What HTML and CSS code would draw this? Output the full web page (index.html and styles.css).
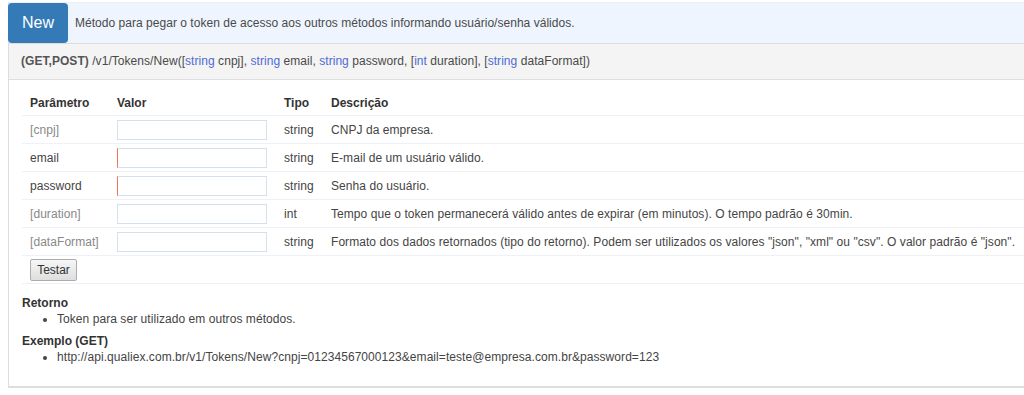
FILE: index.html
```html
<!DOCTYPE html>
<html lang="pt-BR">
<head>
<meta charset="utf-8">
<title>Tokens/New</title>
<link rel="stylesheet" href="styles.css">
</head>
<body>
<div class="panel">
  <div class="panel-head">
    <span class="badge-new">New</span>
    <span class="head-text">Método para pegar o token de acesso aos outros métodos informando usuário/senha válidos.</span>
  </div>
  <div class="signature">
    <b>(GET,POST)</b> /v1/Tokens/New([<span class="type">string</span> cnpj], <span class="type">string</span> email, <span class="type">string</span> password, [<span class="type">int</span> duration], [<span class="type">string</span> dataFormat])
  </div>
  <div class="panel-body">
    <table class="params">
      <colgroup>
        <col class="c1"><col class="c2"><col class="c3"><col class="c4">
      </colgroup>
      <thead>
        <tr><th>Parâmetro</th><th>Valor</th><th>Tipo</th><th>Descrição</th></tr>
      </thead>
      <tbody>
        <tr><td class="opt">[cnpj]</td><td><input class="field" type="text"></td><td>string</td><td>CNPJ da empresa.</td></tr>
        <tr><td>email</td><td><input class="field req" type="text"></td><td>string</td><td>E-mail de um usuário válido.</td></tr>
        <tr><td>password</td><td><input class="field req" type="text"></td><td>string</td><td>Senha do usuário.</td></tr>
        <tr><td class="opt">[duration]</td><td><input class="field" type="text"></td><td>int</td><td>Tempo que o token permanecerá válido antes de expirar (em minutos). O tempo padrão é 30min.</td></tr>
        <tr><td class="opt">[dataFormat]</td><td><input class="field" type="text"></td><td>string</td><td>Formato dos dados retornados (tipo do retorno). Podem ser utilizados os valores "json", "xml" ou "csv". O valor padrão é "json".</td></tr>
        <tr class="btn-row"><td colspan="4"><button class="btn" type="button">Testar</button></td></tr>
      </tbody>
    </table>
    <h4 class="sec">Retorno</h4>
    <ul class="list">
      <li>Token para ser utilizado em outros métodos.</li>
    </ul>
    <h4 class="sec">Exemplo (GET)</h4>
    <ul class="list">
      <li>http://api.qualiex.com.br/v1/Tokens/New?cnpj=01234567000123&amp;email=teste@empresa.com.br&amp;password=123</li>
    </ul>
  </div>
</div>
</body>
</html>
```
FILE: styles.css
```css
html, body {
  margin: 0;
  padding: 0;
  overflow: hidden;
  background: #fff;
}
body {
  font-family: "Liberation Sans", Arial, sans-serif;
  font-size: 12px;
  color: #444;
}
.panel {
  margin: 2px -30px 0 8px;
  border: 1px solid #ddd;
  border-top: 1px solid #f0f0f0;
  border-right: none;
  border-bottom: 2px solid #ddd;
  background: #fff;
}
.panel-head {
  display: flex;
  align-items: center;
  height: 40px;
  background: #eef5fe;
  border-bottom: 1px solid #dcdcdc;
}
.badge-new {
  display: flex;
  align-items: center;
  justify-content: center;
  width: 60px;
  height: 40px;
  margin-left: -1px;
  background: #337ab7;
  color: #fff;
  font-size: 16px;
  border-radius: 4px;
}
.head-text {
  margin-left: 7px;
  color: #4a4a4a;
  letter-spacing: 0.03px;
}
.signature {
  height: 35px;
  line-height: 35px;
  padding-left: 12px;
  background: #f4f4f4;
  border-bottom: 1px solid #dedede;
  color: #4a4a4a;
  letter-spacing: 0.05px;
}
.signature b {
  color: #555;
}
.type {
  color: #4f6bd3;
}
.panel-body {
  padding: 12px 0 21px 13px;
}
.params {
  border-collapse: collapse;
  width: 100%;
}
.c1 { width: 87px; }
.c2 { width: 167px; }
.c3 { width: 47px; }
.params th {
  text-align: left;
  font-weight: bold;
  color: #333;
  padding: 4px 8px 4px 8px;
  height: 15px;
  line-height: 15px;
}
.params td {
  padding: 4px 8px 3px 8px;
  border-top: 1px solid #eef2f8;
  line-height: 15px;
  vertical-align: middle;
  white-space: nowrap;
  letter-spacing: 0.06px;
}
.params tbody tr:last-child {
  border-bottom: 1px solid #eef2f8;
}
.params td.opt {
  color: #888;
}
.field {
  display: block;
  box-sizing: border-box;
  width: 150px;
  height: 20px;
  margin: 0;
  padding: 0 4px;
  border: 1px solid #d6e1ee;
  background: #fff;
  font: inherit;
}
.field.req {
  border-left-color: #ec7650;
}
.params .btn-row td {
  padding: 3px 8px 2px 8px;
}
.btn {
  display: block;
  box-sizing: border-box;
  width: 47px;
  height: 22px;
  padding: 0;
  border: 1px solid #adadad;
  border-radius: 2px;
  background: linear-gradient(#f6f6f6, #dedede);
  color: #333;
  font: inherit;
  letter-spacing: 0;
}
.sec {
  margin: 12px 0 0 0;
  font-size: 12px;
  font-weight: bold;
  color: #333;
  line-height: 15px;
}
.list {
  margin: 0;
  padding-left: 35px;
  line-height: 16px;
  letter-spacing: 0.06px;
}
.list + .sec {
  margin-top: 7px;
}
```
